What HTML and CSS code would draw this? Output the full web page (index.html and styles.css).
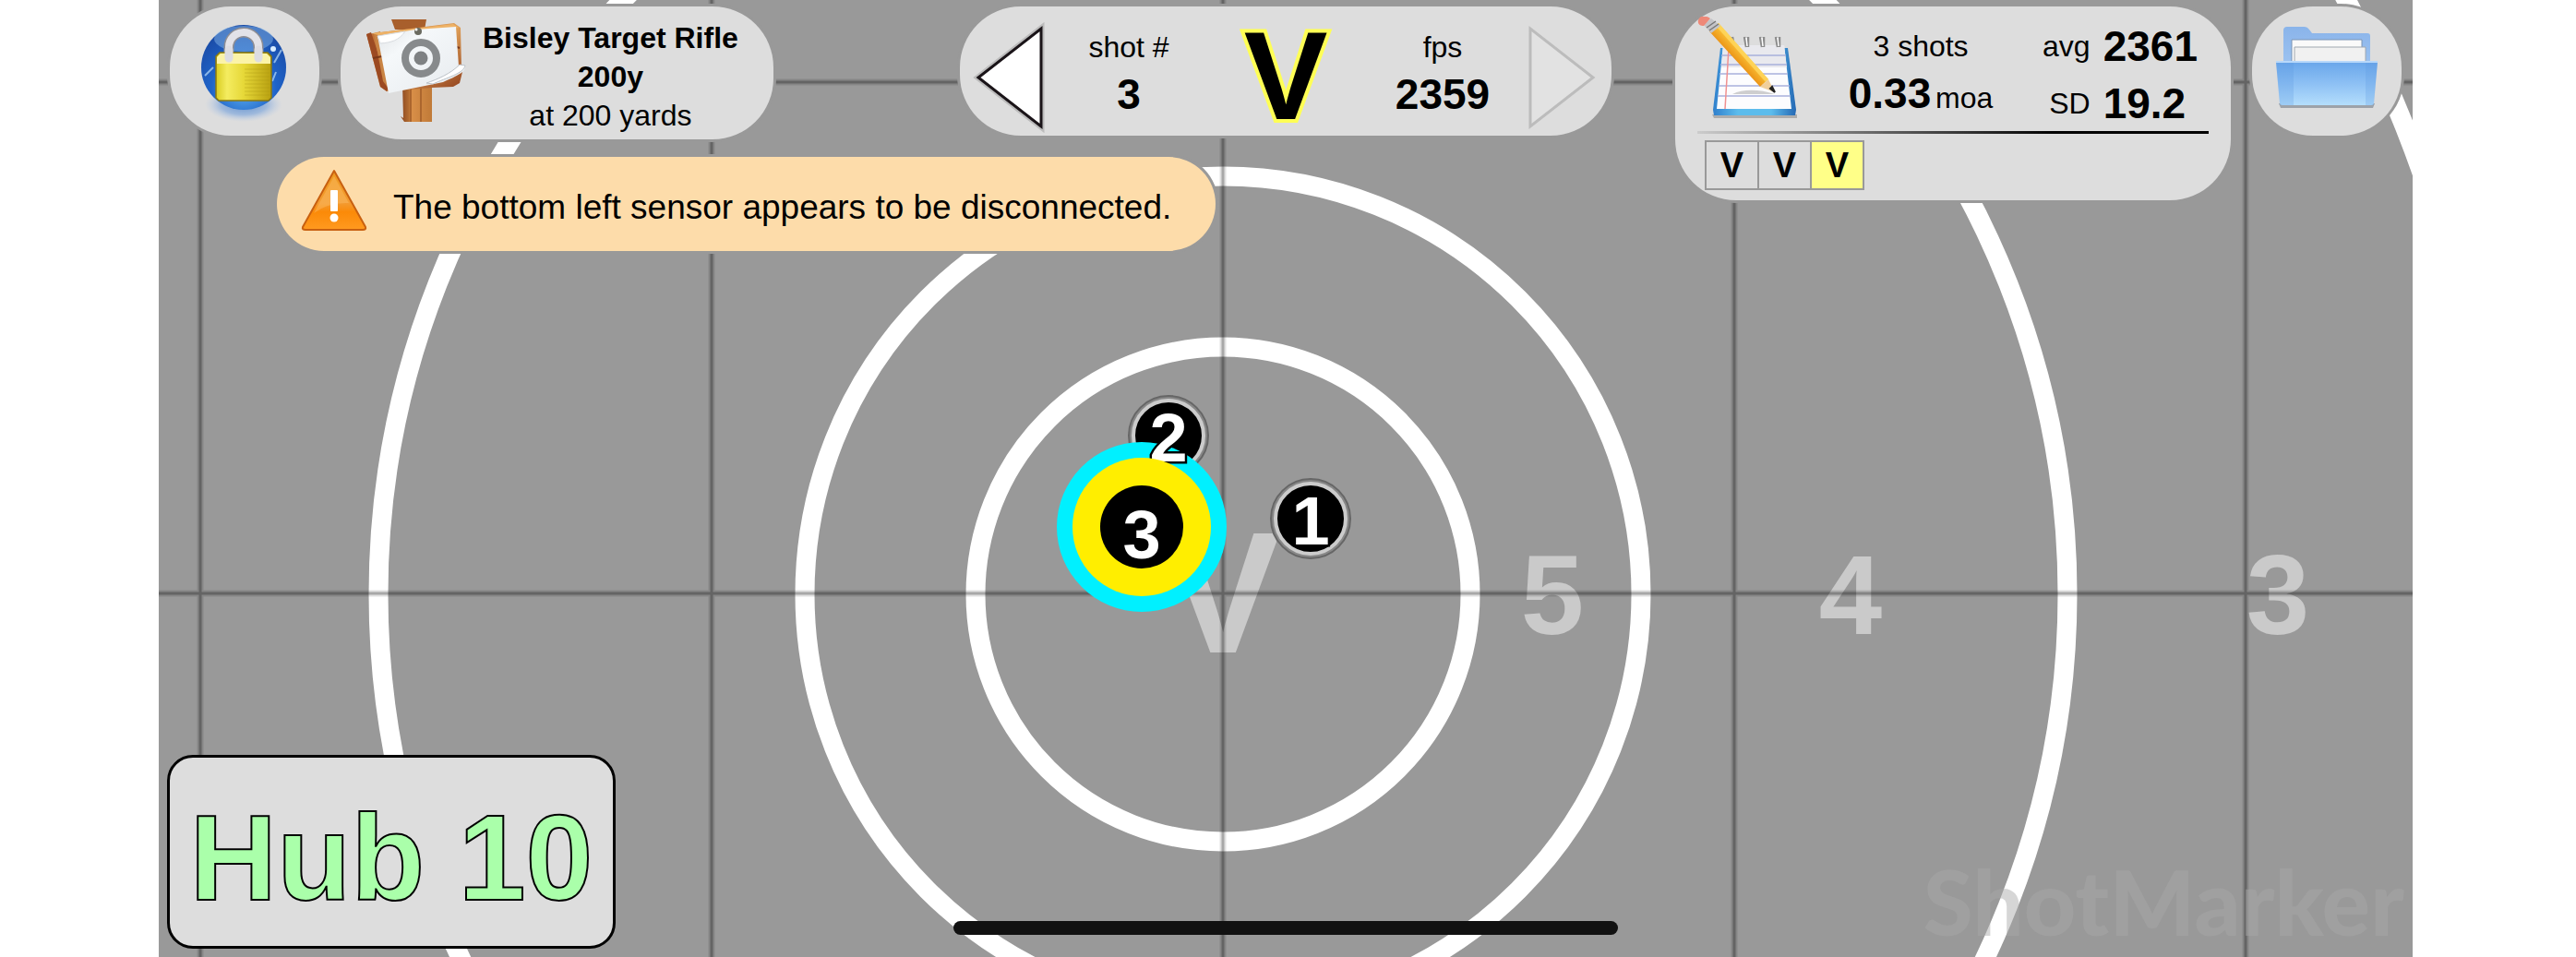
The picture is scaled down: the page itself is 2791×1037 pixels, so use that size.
FILE: index.html
```html
<!DOCTYPE html>
<html lang="en">
<head>
<meta charset="utf-8">
<title>ShotMarker</title>
<link rel="stylesheet" href="styles.css">
</head>
<body>
<main class="app">
  <svg class="target" viewBox="0 0 2442 1037" preserveAspectRatio="xMidYMid slice" role="img" aria-label="Target face with three shots">
    <g class="rings">
      <circle cx="1153" cy="644" r="268"/>
      <circle cx="1153" cy="644" r="453"/>
      <circle cx="1153" cy="644" r="915"/>
      <circle cx="1153" cy="644" r="1377"/>
    </g>
    <g class="ring-labels">
      <text x="1153" y="707" class="bull">V</text>
      <text x="1510" y="687">5</text>
      <text x="1833" y="687">4</text>
      <text x="2296" y="687">3</text>
    </g>
    <g class="grid-soft"><path d="M45 0V1037M599 0V1037M1153 0V1037M1707 0V1037M2261 0V1037M0 89H2442M0 643H2442"/></g>
    <g class="grid-core"><path d="M45 0V1037M599 0V1037M1153 0V1037M1707 0V1037M2261 0V1037M0 89H2442M0 643H2442"/></g>
    <g class="shots">
      <circle cx="1248" cy="562" r="43" class="halo"/>
      <circle cx="1248" cy="562" r="38" class="hole"/>
      <circle cx="1094" cy="472" r="43" class="halo"/>
      <circle cx="1094" cy="472" r="38" class="hole"/>
      <circle cx="1065" cy="571" r="92" fill="#00f0ff"/>
      <text x="1248" y="590">1</text>
      <text x="1094" y="500">2</text>
      <circle cx="1065" cy="571" r="75" fill="#ffee00"/>
      <circle cx="1065" cy="571" r="45" fill="#000"/>
      <text x="1065" y="605">3</text>
    </g>
  </svg>

  <header class="hud">
    <div class="hud-left">
      <button class="panel round" aria-label="Lock">
        <svg class="icon" viewBox="0 0 120 120">
          <defs>
            <radialGradient id="orb" cx=".5" cy=".75" r=".7"><stop offset="0" stop-color="#5db0f0"/><stop offset=".55" stop-color="#1f63c8"/><stop offset="1" stop-color="#1a4ba6"/></radialGradient>
            <linearGradient id="brass" x1="0" x2="1"><stop offset="0" stop-color="#d8cc20"/><stop offset=".2" stop-color="#f4ec60"/><stop offset=".5" stop-color="#e6d838"/><stop offset="1" stop-color="#b8a010"/></linearGradient>
            <radialGradient id="shade"><stop offset="0" stop-color="#5f8fce"/><stop offset=".6" stop-color="#8fb0dc" stop-opacity=".8"/><stop offset="1" stop-color="#bccde6" stop-opacity="0"/></radialGradient>
          </defs>
          <ellipse cx="59" cy="95" rx="42" ry="19" fill="url(#shade)"/>
          <circle cx="59" cy="55" r="46" fill="url(#orb)"/>
          <ellipse cx="59" cy="24" rx="32" ry="14" fill="#8fc0f0" opacity=".45"/>
          <path d="M17 64l9-9M92 50l8-14M90 70l4-10" stroke="#b8dcf8" stroke-width="2" fill="none" opacity=".7"/>
          <circle cx="91" cy="35" r="3" fill="#d8ecff"/>
          <path d="M43 44V33a16 16 0 0 1 32 0V44" fill="none" stroke="#8d8d94" stroke-width="11" stroke-linecap="round"/>
          <path d="M43 44V33a16 16 0 0 1 32 0V44" fill="none" stroke="#e2e2e8" stroke-width="8" stroke-linecap="round"/>
          <path d="M33 39H85L89 43V88L86 91H32L29 88V43Z" fill="url(#brass)" stroke="#8a7810" stroke-width="1.5"/>
          <path d="M34 40H84L88 44V51H30V44Z" fill="#fbf3a8"/>
          <path d="M43 36V45M75 36V45" stroke="#dcdce2" stroke-width="9" stroke-linecap="round"/>
          <path d="M60 57H87M60 61H87M60 65H87M60 69H87M60 73H87M60 77H87M60 81H87M60 85H87" stroke="#a89410" opacity=".35"/>
        </svg>
      </button>
      <button class="panel title">
        <svg class="icon-sign" viewBox="0 0 112 114">
          <defs>
            <linearGradient id="post" x1="0" x2="1"><stop offset="0" stop-color="#8a4620"/><stop offset=".25" stop-color="#b06a30"/><stop offset=".35" stop-color="#d98f48"/><stop offset="1" stop-color="#c07a38"/></linearGradient>
            <linearGradient id="board" x1="0" x2="1" y1="0" y2="1"><stop offset="0" stop-color="#b5622c"/><stop offset=".5" stop-color="#e0a058"/><stop offset="1" stop-color="#8f3f1c"/></linearGradient>
            <linearGradient id="sheet" x1="0" x2="1" y1="0" y2="1"><stop offset="0" stop-color="#dfe2e4"/><stop offset=".3" stop-color="#f5f8fa"/><stop offset="1" stop-color="#e6eaee"/></linearGradient>
          </defs>
          <path d="M30 1H68L66 12H34Z" fill="#a85f2c"/>
          <path d="M42 70H74V112H44L40 106 43 108Z" fill="url(#post)"/>
          <path d="M51 72V112M62 72V112" stroke="#a05c28" stroke-width="1.5"/>
          <path d="M3 17L98 5 105 10 106 55 107 58 104 70 97 74 74 75 25 79 18 74Z" fill="url(#board)"/>
          <path d="M3 17L8 15 28 74 25 79 18 74Z" fill="#9c4a22"/>
          <path d="M11 16L18 14 24 38 28 60 27 76 21 68Z" fill="#c98444"/>
          <path d="M9 16L97 6 103 10 50 16 16 18Z" fill="#eeb266"/>
          <path d="M10 43L20 41M98 30L104 32" stroke="#7a3818" stroke-width="2"/>
          <path d="M15 19L56 12 100 9 103 52 109 50C112 56 107 60 86 69L27 81Z" fill="url(#sheet)"/>
          <path d="M15 19L45 14C38 24 30 26 18 27Z" fill="#fff" stroke="#d8dce0"/>
          <path d="M75 71C90 64 108 60 110 51L104 50C94 60 80 66 68 70Z" fill="#fff" stroke="#bcc2c8"/>
          <circle cx="62" cy="43" r="17" fill="none" stroke="#878a8c" stroke-width="8"/>
          <circle cx="62" cy="43" r="7.500" fill="#7e8183"/>
          <circle cx="59" cy="14" r="4" fill="#6a6a60"/><circle cx="57" cy="12" r="1.500" fill="#fff"/>
        </svg>
        <span class="title-text"><strong>Bisley Target Rifle<br>200y</strong><br>at 200 yards</span>
      </button>
    </div>

    <section class="panel shot-nav" aria-label="Current shot">
      <button class="arrow" aria-label="Previous shot">
        <svg viewBox="0 0 84 120"><path d="M74 7V113L6 60Z" fill="none" stroke="#bbb" stroke-width="7"/><path d="M74 7V113L6 60Z" fill="#fff" stroke="#1a1418" stroke-width="3"/></svg>
      </button>
      <div class="stat"><span class="label">shot #</span><b class="value">3</b></div>
      <b class="score">V</b>
      <div class="stat"><span class="label">fps</span><b class="value">2359</b></div>
      <button class="arrow" aria-label="Next shot" disabled>
        <svg viewBox="0 0 84 120"><path d="M10 7V113L78 60Z" fill="#e2e2e2" stroke="#bcbcbc" stroke-width="3"/></svg>
      </button>
    </section>

    <div class="hud-right">
      <section class="panel stats" aria-label="Group statistics">
        <div class="stats-top">
          <svg class="icon-note" viewBox="0 0 110 114">
            <defs><linearGradient id="edge" x1="0" x2="1"><stop offset="0" stop-color="#2f7fcc"/><stop offset=".3" stop-color="#5cbcec"/><stop offset=".7" stop-color="#5cbcec"/><stop offset="1" stop-color="#2468b4"/></linearGradient>
            <linearGradient id="pencil" x1="0" y1="1" x2="1" y2="0"><stop offset=".4" stop-color="#e88a10"/><stop offset=".6" stop-color="#ffd040"/></linearGradient></defs>
            <path d="M16 106H108V110H18Z" fill="#999" opacity=".7"/>
            <path d="M25 34H98L107 101 106 107H18L17 101Z" fill="url(#edge)"/>
            <path d="M28 31H94L102 100H21Z" fill="#fcfcfe"/>
            <path d="M28 31H94L97 55H26Z" fill="#e9e9ee"/>
            <path d="M26 42H96M25 52H97M24 62H98M23 75H100M22 86H101" stroke="#a8b0dc" stroke-width="1.500"/>
            <path d="M34 34L30 100" stroke="#f09090" stroke-width="1.500"/>
            <path d="M38 84C50 78 68 79 84 84Z" fill="#bbb" opacity=".7"/>
            <path d="M35 22L37 33M38 22L40 33M51 22L53 33M55 22V33M68 22L70 33M72 22V33M85 22L87 33M89 22V33" stroke="#8c8c8c" stroke-width="2.500"/>
            <path d="M36 23L38 32M53 23L54 32M70 23L71 32M87 23L88 32" stroke="#fff" stroke-width="1.500"/>
            <path d="M13 16L23 7 77 68 68 76Z" fill="url(#pencil)"/>
            <path d="M23 7L77 68 74 71 20 10Z" fill="#ffd860" opacity=".8"/>
            <path d="M68 76L77 68 84 82Z" fill="#f0cf9c"/><path d="M79 78L81 76 84 82Z" fill="#222" stroke="#222" stroke-width="2"/>
            <path d="M7 9L15 2 25 10 15 18Z" fill="#c4c4c8"/><path d="M10 12L20 5M13 15L23 8" stroke="#777" stroke-width="1.500"/>
            <path d="M1 4C2-1 9-2 14 2L7 10C3 10 0 8 1 4Z" fill="#ee8878"/>
          </svg>
          <div class="stat"><span class="label">3 shots</span><span class="label"><b class="value">0.33</b> moa</span></div>
          <dl class="speed">
            <dt>avg</dt><dd>2361</dd>
            <dt>SD</dt><dd>19.2</dd>
          </dl>
        </div>
        <ol class="scores"><li>V</li><li>V</li><li class="current">V</li></ol>
      </section>
      <button class="panel round" aria-label="Open folder">
        <svg class="icon" viewBox="0 0 120 120">
          <defs><linearGradient id="front" x1="0" x2="0" y1="0" y2="1"><stop offset="0" stop-color="#69a6ea"/><stop offset=".5" stop-color="#8dc0f4"/><stop offset="1" stop-color="#b4defc"/></linearGradient>
          <linearGradient id="back" x1="0" x2="0" y1="0" y2="1"><stop offset="0" stop-color="#8ab4ea"/><stop offset="1" stop-color="#9cc2f0"/></linearGradient></defs>
          <path d="M8 94H112L110 99H10Z" fill="#8d949c" opacity=".8"/>
          <path d="M13 15Q13 11 17 11H36Q39 11 41 14L44 18H104Q107 18 107 21V50H13Z" fill="url(#back)"/>
          <path d="M22 25H98V50H22Z" fill="#fafafa" stroke="#7b94b4"/>
          <path d="M25 33H102V50H25Z" fill="#f1f1f1" stroke="#a0a8b0"/>
          <path d="M5 49H115L111 93Q111 96 108 96H12Q9 96 9 93Z" fill="url(#front)"/>
          <path d="M5 49H115" stroke="#b8d8fa" stroke-width="2"/>
          <path d="M5 50H24V96H9ZM102 50H115L111 96H102Z" fill="#5c98e0" opacity=".25"/>
        </svg>
      </button>
    </div>

    <div class="panel alert" role="alert">
      <svg class="icon-warn" viewBox="0 0 72 68">
        <defs><linearGradient id="warn" x1="0" x2="0" y1="0" y2="1"><stop offset="0" stop-color="#ee9a20"/><stop offset=".55" stop-color="#f39a30"/><stop offset=".7" stop-color="#fb8a08"/><stop offset="1" stop-color="#ff9a20"/></linearGradient></defs>
        <path d="M36 2L70 63Q71 66 67 66H5Q1 66 2 63Z" fill="url(#warn)" stroke="#c86010" stroke-width="2" stroke-linejoin="round"/>
        <path d="M36 8L14 48Q30 36 52 37Z" fill="#ffc878" opacity=".35"/>
        <rect x="32" y="23" width="8" height="23" rx="1" fill="#fff"/><circle cx="36" cy="53" r="4.500" fill="#fff"/>
      </svg>
      <span>The bottom left sensor appears to be disconnected.</span>
    </div>
  </header>

  <footer class="bottom">
    <div class="hub">Hub 10</div>
    <div class="home-bar"></div>
    <div class="brand">ShotMarker</div>
  </footer>
</main>
</body>
</html>
```
FILE: styles.css
```css
* { box-sizing: border-box; }

body {
  margin: 0;
  background: #fff;
  color: #000;
  font-family: "Liberation Sans", Arial, sans-serif;
  font-size: 32px;
  line-height: 42px;
}

button {
  border: 0;
  padding: 0;
  background: none;
  color: inherit;
  font: inherit;
}

svg { display: block; }

.app {
  position: relative;
  display: flex;
  flex-direction: column;
  justify-content: space-between;
  min-height: 100vh;
  margin: 0 177px 0 172px;
  overflow: hidden;
  background: #999;
}

/* Target face */
.target {
  position: absolute;
  inset: 0;
  width: 100%;
  height: 100%;
}
.rings { fill: none; stroke: #fff; stroke-width: 21px; }
.ring-labels { fill: #cacaca; font-weight: bold; font-size: 123px; text-anchor: middle; }
.ring-labels .bull { font-size: 188px; }
.grid-soft { stroke: rgba(0, 0, 0, 0.12); stroke-width: 7px; }
.grid-core { stroke: rgba(0, 0, 0, 0.25); stroke-width: 3px; }
.halo { fill: #888; stroke: #666; stroke-width: 2px; }
.hole { fill: #000; stroke: #ccc; stroke-width: 4px; }
.shots text {
  fill: #fff;
  stroke: #000;
  stroke-width: 5px;
  paint-order: stroke fill;
  font-weight: bold;
  font-size: 74px;
  text-anchor: middle;
}

/* Overlay panels */
.hud {
  position: relative;
  display: grid;
  grid-template-columns: 1fr auto 1fr;
  grid-template-rows: 144px auto;
  row-gap: 19px;
  align-items: start;
  padding: 7px 12px 0;
}
.hud-left { display: flex; align-items: start; gap: 23px; }
.hud-right {
  grid-column: 3;
  grid-row: 1 / span 2;
  display: flex;
  justify-content: flex-end;
  align-items: start;
  gap: 23px;
}
.panel {
  border-radius: 66px;
  background: #ddd;
  box-shadow: 0 0 0 3px #999;
}
.round {
  display: flex;
  justify-content: center;
  width: 162px;
  height: 140px;
  padding-top: 11px;
}
.icon { width: 120px; height: 120px; }

.title {
  display: flex;
  gap: 17px;
  padding: 13px 38px 5px 25px;
}
.icon-sign { width: 112px; height: 114px; }
.title-text { text-align: center; }

.shot-nav {
  display: grid;
  grid-template-columns: 84px 170px 170px 170px 84px;
  height: 140px;
  padding: 0 14px;
}
.arrow { padding-top: 3px; }
.arrow svg { width: 84px; height: 120px; }
.stat {
  display: flex;
  flex-direction: column;
  align-items: center;
  padding-top: 23px;
}
.value { font-size: 46px; line-height: 60px; }
.score {
  color: #000;
  font-size: 136px;
  line-height: 150px;
  text-align: center;
  -webkit-text-stroke: 8px #ffff55;
  paint-order: stroke fill;
}

.stats { width: 602px; height: 210px; padding: 0 24px; }
.stats-top {
  display: flex;
  justify-content: space-between;
  height: 138px;
  padding-right: 12px;
  border-bottom: 3px solid;
  border-image: linear-gradient(to right, #ccc, #000 70%) 1;
}
.stats-top .stat { padding-top: 22px; }
.stats-top .value { margin-right: -4px; }
.icon-note { width: 110px; height: 114px; margin-top: 11px; }
.speed {
  display: grid;
  grid-template-columns: auto auto;
  grid-auto-rows: 62px;
  column-gap: 14px;
  align-items: center;
  margin: 12px 0 0;
}
.speed dt { text-align: right; }
.speed dd { margin: 0; font-weight: bold; font-size: 46px; line-height: 62px; }

.scores {
  display: flex;
  width: max-content;
  margin: 7px 0 0 8px;
  padding: 0;
  border: 2px solid #999;
  list-style: none;
  font-weight: bold;
  font-size: 38px;
  line-height: 50px;
  text-align: center;
}
.scores li { width: 55px; }
.scores li + li { width: 57px; border-left: 2px solid #999; }
.scores .current { background: #ffff88; }

.alert {
  grid-column: 1 / span 2;
  grid-row: 2;
  justify-self: start;
  display: flex;
  align-items: center;
  gap: 28px;
  height: 102px;
  margin-left: 116px;
  padding: 0 48px 0 26px;
  border-radius: 51px;
  background: #fddcaa;
  font-size: 37px;
}
.icon-warn { width: 72px; height: 68px; margin-bottom: 8px; }
.alert span { padding-top: 8px; }

/* Bottom row */
.bottom {
  position: relative;
  display: grid;
  grid-template-columns: 1fr auto 1fr;
  align-items: end;
  padding: 0 9px;
}
.hub {
  justify-self: start;
  width: 486px;
  height: 210px;
  margin-bottom: 9px;
  padding-top: 14px;
  border: 3px solid #000;
  border-radius: 28px;
  background: #ddd;
  color: #aaffaa;
  font-weight: bold;
  font-size: 131px;
  line-height: 190px;
  text-align: center;
  -webkit-text-stroke: 2px #000;
}
.home-bar {
  width: 720px;
  height: 15px;
  margin-bottom: 24px;
  border-radius: 8px;
  background: #111;
}
.brand {
  justify-self: end;
  margin-bottom: 2px;
  color: rgba(168, 168, 168, 0.47);
  font-family: Lato, sans-serif;
  font-weight: 900;
  font-size: 98px;
  line-height: 118px;
}
```
